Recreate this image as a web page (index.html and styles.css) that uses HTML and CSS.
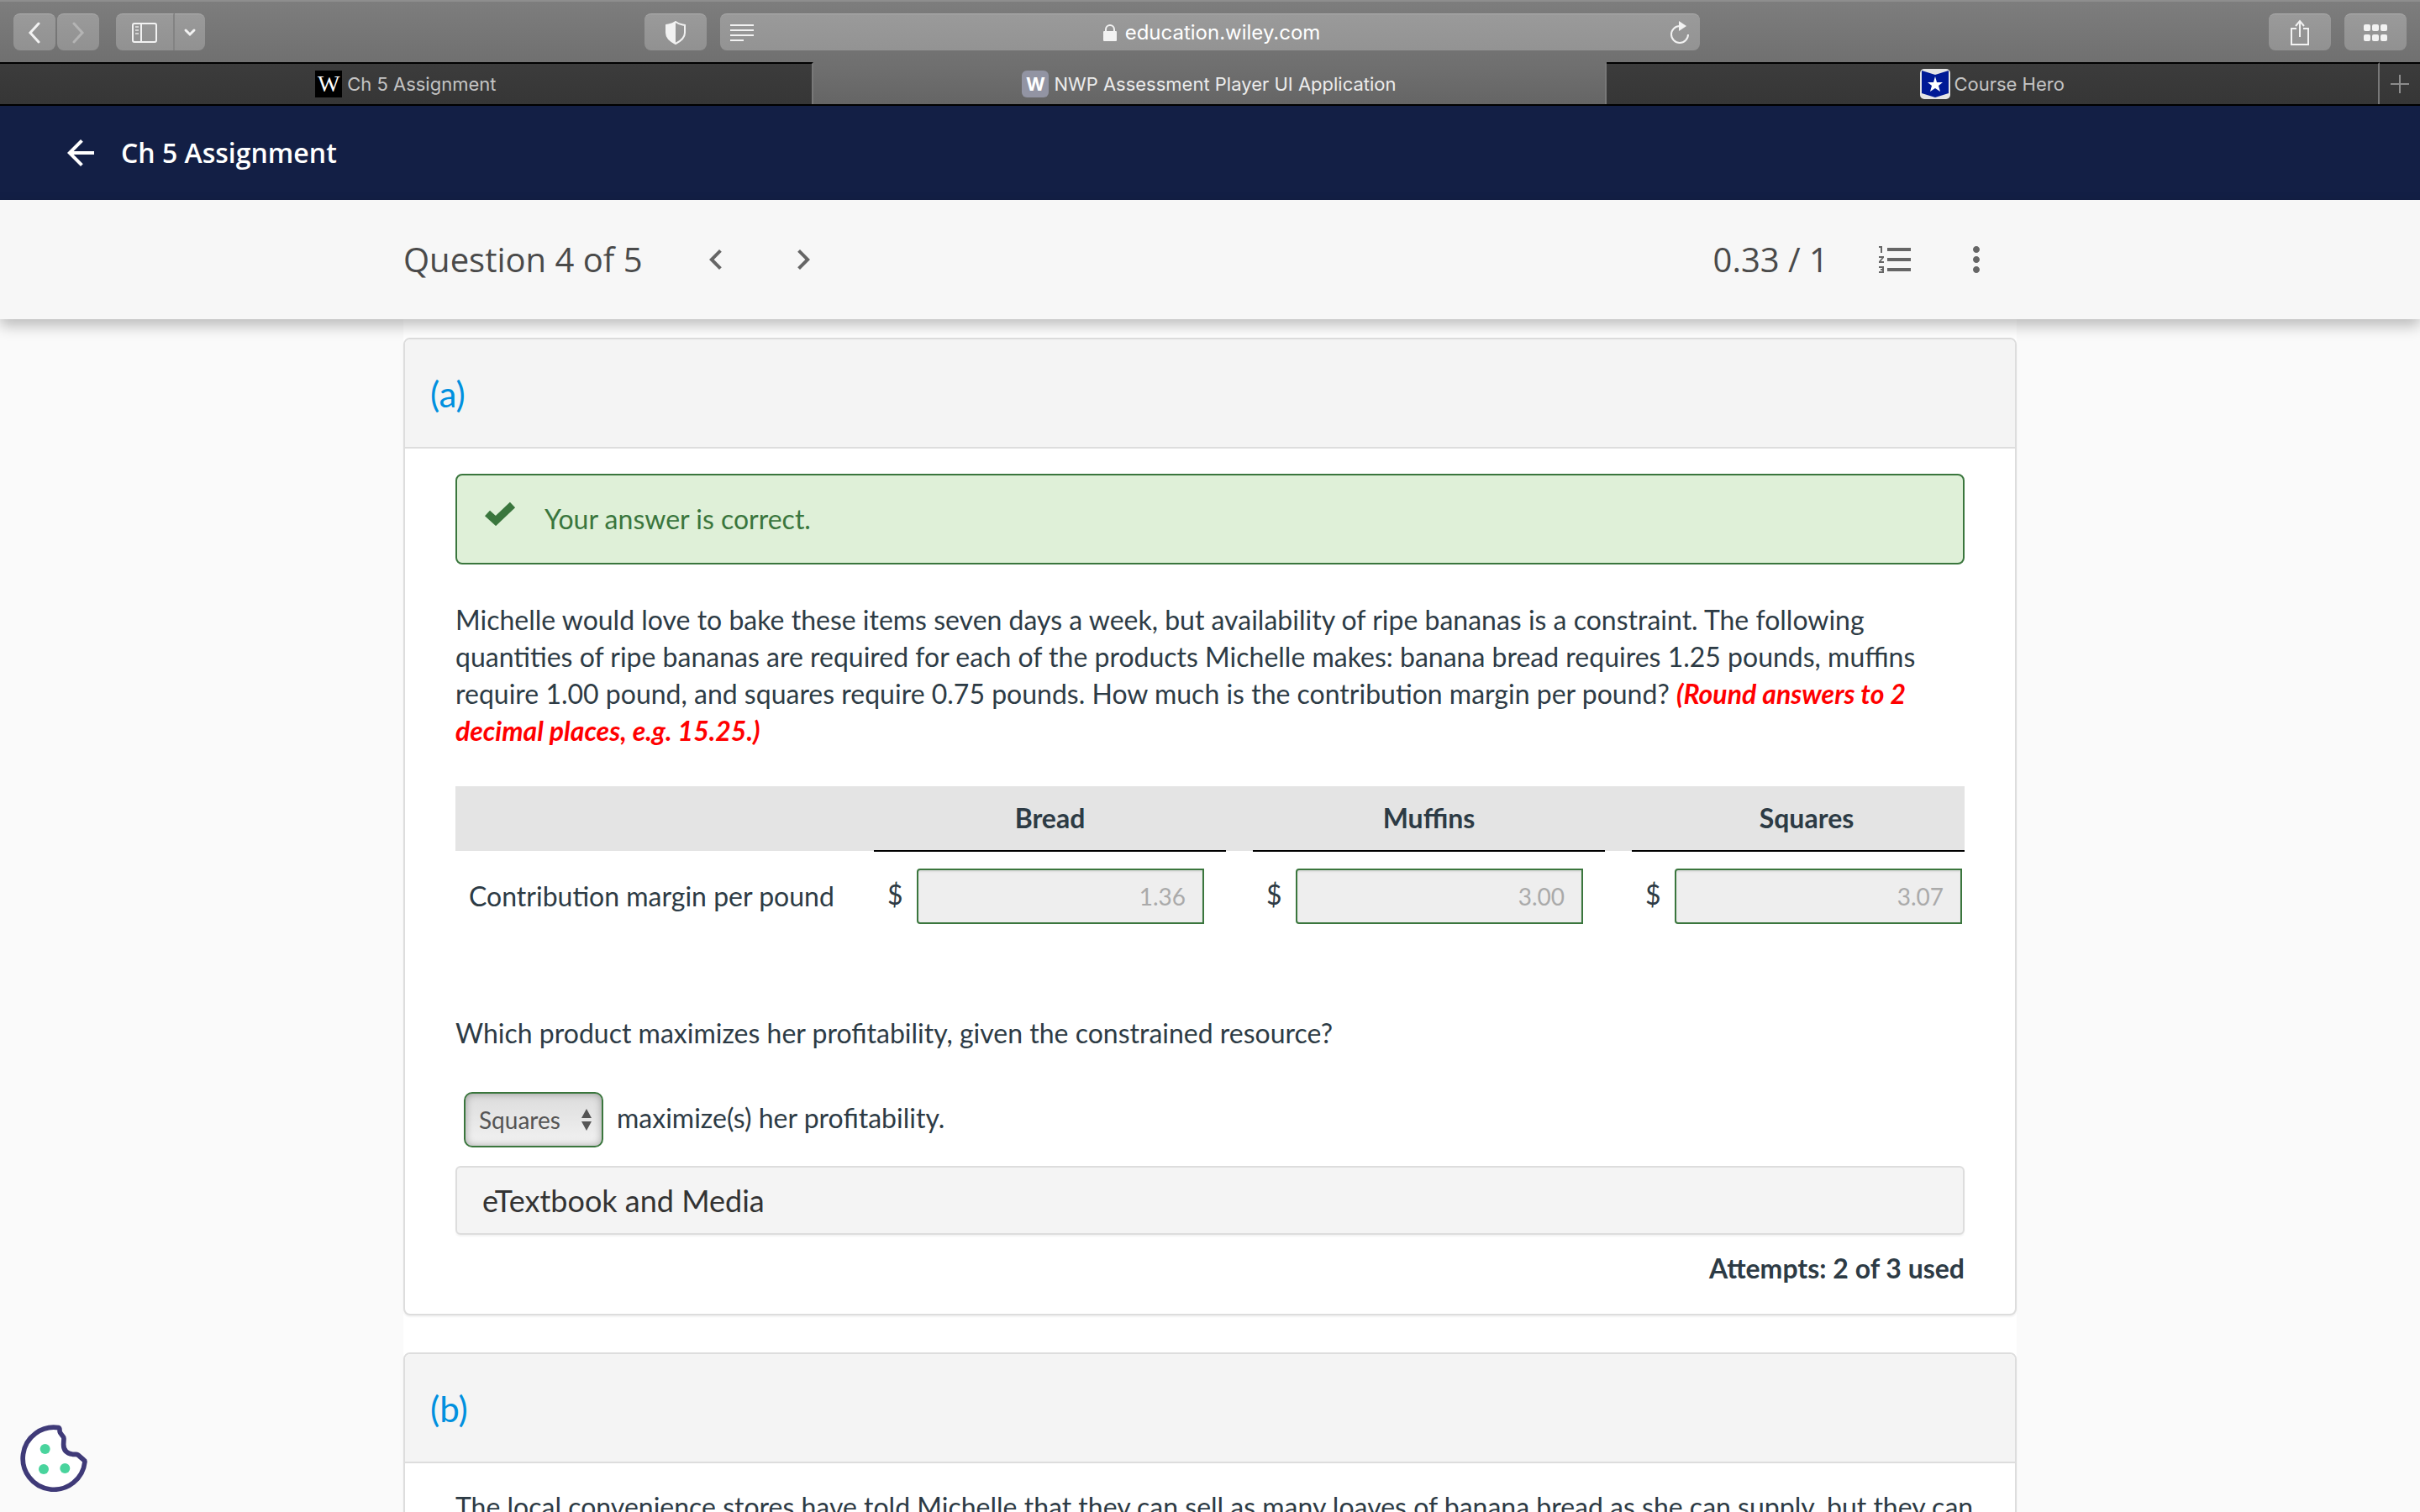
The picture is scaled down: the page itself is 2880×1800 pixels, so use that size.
FILE: index.html
```html
<!DOCTYPE html>
<html lang="en">
<head>
    <meta charset="UTF-8">
    <meta name="viewport" content="width=device-width, initial-scale=1.0">
    <title>NWP Assessment Player UI Application</title>
    <link rel="stylesheet" href="styles.css">
</head>
<body>
    <!-- browser toolbar -->
    <div class="toolbar">
        <div class="tool-left">
            <div class="nav-buttons">
                <button class="tool-btn small" aria-label="Back">
                    <svg width="16" height="26" viewBox="0 0 16 26"><path d="M13 2 3 13l10 11" fill="none" stroke="#f2f2f2" stroke-width="3" stroke-linecap="round"/></svg>
                </button>
                <button class="tool-btn small" aria-label="Forward">
                    <svg width="16" height="26" viewBox="0 0 16 26"><path d="m3 2 10 11L3 24" fill="none" stroke="#b4b4b4" stroke-width="3" stroke-linecap="round"/></svg>
                </button>
            </div>
            <div class="sidebar-buttons">
                <button class="tool-btn sidebar" aria-label="Show sidebar">
                    <svg width="30" height="24" viewBox="0 0 30 24"><rect x="1" y="1" width="28" height="22" rx="2" fill="none" stroke="#f2f2f2" stroke-width="2"/><path d="M11 1v22" stroke="#f2f2f2" stroke-width="2"/><path d="M4 5h4M4 9h4M4 13h4" stroke="#d2d2d2" stroke-width="2"/></svg>
                </button>
                <button class="tool-btn arrow" aria-label="Sidebar menu">
                    <svg width="16" height="12" viewBox="0 0 16 12"><path d="m3 3 5 5 5-5" fill="none" stroke="#f2f2f2" stroke-width="3" stroke-linecap="round"/></svg>
                </button>
            </div>
        </div>
        <div class="tool-center">
            <button class="tool-btn" aria-label="Privacy report">
                <svg width="24" height="28" viewBox="0 0 24 28"><path d="M12 1c4 3 7 3 11 4v9c0 6-5 10-11 13C6 24 1 20 1 14V5c4-1 7-1 11-4z" fill="none" stroke="#f2f2f2" stroke-width="2"/><path d="M12 1v26C6 24 1 20 1 14V5c4-1 7-1 11-4z" fill="#f2f2f2"/></svg>
            </button>
            <div class="address">
                <svg width="28" height="20" viewBox="0 0 28 20"><path d="M0 1h28M0 7h28M0 13h28M0 19h16" stroke="#f2f2f2" stroke-width="2"/></svg>
                <span class="url">
                    <svg width="16" height="20" viewBox="0 0 16 20"><rect y="8" width="16" height="12" rx="1" fill="#f2f2f2"/><path d="M3 9V6a5 5 0 0 1 10 0v3" fill="none" stroke="#f2f2f2" stroke-width="2"/></svg>
                    education.wiley.com
                </span>
                <svg width="24" height="28" viewBox="0 0 24 28"><path d="M12 6a10 10 0 1 0 10 10" fill="none" stroke="#f2f2f2" stroke-width="2"/><path d="m11 0 9 6-9 6z" fill="#f2f2f2"/></svg>
            </div>
        </div>
        <div class="tool-right">
            <button class="tool-btn" aria-label="Share">
                <svg width="24" height="32" viewBox="0 0 24 32"><path d="M8 11H2v19h20V11h-6" fill="none" stroke="#f2f2f2" stroke-width="2"/><path d="M12 21V2M7 8l5-6 5 6" fill="none" stroke="#f2f2f2" stroke-width="2"/></svg>
            </button>
            <button class="tool-btn" aria-label="Tab overview">
                <svg width="28" height="20" viewBox="0 0 28 20" fill="#f2f2f2"><rect width="8" height="8" rx="2"/><rect x="10" width="8" height="8" rx="2"/><rect x="20" width="8" height="8" rx="2"/><rect y="12" width="8" height="8" rx="2"/><rect x="10" y="12" width="8" height="8" rx="2"/><rect x="20" y="12" width="8" height="8" rx="2"/></svg>
            </button>
        </div>
    </div>

    <!-- browser tabs -->
    <div class="tabs">
        <div class="tab first"><span class="favicon wiley">W</span>Ch 5 Assignment</div>
        <div class="tab active"><span class="favicon nwp">W</span>NWP Assessment Player UI Application</div>
        <div class="tab last">
            <svg width="36" height="36" viewBox="0 0 36 36"><rect width="36" height="36" rx="5" fill="#e4e4e4"/><path d="M2 2l16 5 16-5v27l-16 5-16-5z" fill="#001a96"/><path d="m18 9 2 7h7l-5 4 2 7-6-4-6 4 2-7-5-4h7z" fill="#fff"/></svg>Course Hero
        </div>
        <button class="new-tab" aria-label="New tab">
            <svg width="22" height="22" viewBox="0 0 22 22"><path d="M11 0v22M0 11h22" stroke="#8c8c8c" stroke-width="2"/></svg>
        </button>
    </div>

    <header class="header">
        <a href="#" class="back" aria-label="Back to assignments">
            <svg width="48" height="48" viewBox="0 0 24 24" fill="#fff"><path d="M20 11H7.83l5.59-5.59L12 4l-8 8 8 8 1.41-1.41L7.83 13H20v-2z"/></svg>
        </a>
        <h1>Ch 5 Assignment</h1>
    </header>

    <div class="question-bar">
        <div class="question-inner">
            <h2>Question 4 of 5</h2>
            <button class="icon-btn" aria-label="Previous question">
                <svg width="48" height="48" viewBox="0 0 24 24"><path d="M15.41 7.41 14 6l-6 6 6 6 1.41-1.41L10.83 12z"/></svg>
            </button>
            <button class="icon-btn next" aria-label="Next question">
                <svg width="48" height="48" viewBox="0 0 24 24"><path d="M10 6 8.59 7.41 13.17 12l-4.58 4.59L10 18l6-6z"/></svg>
            </button>
            <span class="score">0.33 / 1</span>
            <button class="icon-btn list" aria-label="Question list">
                <svg width="48" height="48" viewBox="0 0 24 24"><path d="M2 17h2v.5H3v1h1v.5H2v1h3v-4H2v1zm1-9h1V4H2v1h1v3zm-1 3h1.8L2 13.1v.9h3v-1H3.2L5 10.9V10H2v1zm5-6v2h14V5H7zm0 14h14v-2H7v2zm0-6h14v-2H7v2z"/></svg>
            </button>
            <button class="icon-btn more" aria-label="More options">
                <svg width="48" height="48" viewBox="0 0 24 24"><path d="M12 8c1.1 0 2-.9 2-2s-.9-2-2-2-2 .9-2 2 .9 2 2 2zm0 2c-1.1 0-2 .9-2 2s.9 2 2 2 2-.9 2-2-.9-2-2-2zm0 6c-1.1 0-2 .9-2 2s.9 2 2 2 2-.9 2-2-.9-2-2-2z"/></svg>
            </button>
        </div>
    </div>

    <main class="content">
        <div class="container">
            <section class="panel">
                <h3>(a)</h3>
                <div class="panel-body">
                    <div class="alert">
                        <svg width="38" height="30" viewBox="0 0 38 30"><path d="m4 15 10 9L34 5" fill="none" stroke="#3a763d" stroke-width="9"/></svg>
                        Your answer is correct.
                    </div>
                    <p>Michelle would love to bake these items seven days a week, but availability of ripe bananas is a constraint. The following quantities of ripe bananas are required for each of the products Michelle makes: banana bread requires 1.25 pounds, muffins require 1.00 pound, and squares require 0.75 pounds. How much is the contribution margin per pound? <em>(Round answers to 2<br>decimal places, e.g. 15.25.)</em></p>

                    <table>
                        <colgroup>
                            <col>
                            <col class="col-answer">
                            <col class="col-gap">
                            <col class="col-answer">
                            <col class="col-gap">
                            <col class="col-last">
                        </colgroup>
                        <thead>
                            <tr>
                                <td></td>
                                <th id="bread">Bread</th>
                                <td></td>
                                <th id="muffins">Muffins</th>
                                <td></td>
                                <th id="squares" class="last">Squares</th>
                            </tr>
                        </thead>
                        <tbody>
                            <tr>
                                <th id="margin" class="row-name">Contribution margin per pound</th>
                                <td><div class="answer"><span>$</span><input type="text" value="1.36" aria-labelledby="margin bread" disabled></div></td>
                                <td></td>
                                <td><div class="answer"><span>$</span><input type="text" value="3.00" aria-labelledby="margin muffins" disabled></div></td>
                                <td></td>
                                <td><div class="answer"><span>$</span><input type="text" value="3.07" aria-labelledby="margin squares" disabled></div></td>
                            </tr>
                        </tbody>
                    </table>

                    <p class="question">Which product maximizes her profitability, given the constrained resource?</p>

                    <div class="choice">
                        <div class="select">
                            <select id="id_product" disabled>
                                <option>Bread</option>
                                <option>Muffins</option>
                                <option selected>Squares</option>
                            </select>
                            <svg width="14" height="26" viewBox="0 0 14 26" fill="#555"><path d="m7 0 6 11H1zM7 26l6-11H1z"/></svg>
                        </div>
                        <label for="id_product">maximize(s) her profitability.</label>
                    </div>

                    <button class="media">eTextbook and Media</button>
                    <div class="attempts">Attempts: 2 of 3 used</div>
                </div>
            </section>

            <section class="panel">
                <h3>(b)</h3>
                <div class="panel-body">
                    <p class="stores">The local convenience stores have told Michelle that they can sell as many loaves of banana bread as she can supply, but they can</p>
                </div>
            </section>
        </div>
    </main>

    <button class="cookie" aria-label="Cookie settings">
        <svg width="80" height="80" viewBox="0 0 240 240"><path d="M138 11A111 111 0 1 0 231 132q0-4-4-6l-14-12q-6-8-14-8l-12 0q-34-6-32-38l1-18q0-5-5-10l-8-11q-2-4-2-9 0-8-3-9z" fill="#fff" stroke="#3f3a78" stroke-width="17" stroke-linejoin="round"/><g fill="#49d49d"><circle cx="89" cy="87" r="18"/><circle cx="84" cy="159" r="18"/><circle cx="160" cy="156" r="18"/></g></svg>
    </button>
</body>
</html>
```
FILE: styles.css
```css
* {
    box-sizing: border-box;
}

body {
    margin: 0;
    height: 100vh;
    display: flex;
    flex-direction: column;
    overflow: hidden;
    background-color: #fafafa;
    font-family: Lato, sans-serif;
    font-size: 32px;
    line-height: 44px;
    color: #2d3b45;
}

button {
    border: none;
    padding: 0;
    background: none;
    cursor: pointer;
    display: flex;
    align-items: center;
    justify-content: center;
}

svg {
    display: block;
    flex-shrink: 0;
}

/* browser */
.toolbar {
    flex-shrink: 0;
    height: 74px;
    padding: 0 16px;
    display: flex;
    align-items: center;
    background: linear-gradient(#7d7d7d, #707070);
    border-top: 2px solid #8e8e8e;
    font-family: Inter, sans-serif;
}

.tool-left,
.tool-center,
.tool-right {
    display: flex;
    gap: 16px;
}

.tool-left {
    flex: 751;
    gap: 20px;
}

.tool-center {
    flex: 1256;
}

.tool-right {
    flex: 841;
    justify-content: flex-end;
}

.nav-buttons {
    display: flex;
    gap: 2px;
}

.sidebar-buttons {
    display: flex;
}

.tool-btn {
    width: 74px;
    height: 44px;
    border-radius: 8px;
    background: linear-gradient(#9a9a9a, #919191);
    border-top: 1px solid #adadad;
}

.tool-btn.small {
    width: 50px;
}

.tool-btn.sidebar {
    width: 70px;
    border-radius: 8px 0 0 8px;
    border-right: 2px solid #838383;
}

.tool-btn.arrow {
    width: 36px;
    border-radius: 0 8px 8px 0;
}

.address {
    flex: 1;
    height: 44px;
    padding: 0 12px;
    display: flex;
    align-items: center;
    justify-content: space-between;
    border-radius: 8px;
    background: linear-gradient(#9a9a9a, #939393);
    border-top: 1px solid #adadad;
}

.url {
    display: flex;
    align-items: center;
    gap: 10px;
    font-size: 24px;
    color: #fff;
}

.tabs {
    flex-shrink: 0;
    height: 52px;
    display: flex;
    background: linear-gradient(#3c3c3c, #363636);
    border-bottom: 2px solid #000;
    font-family: Inter, sans-serif;
    font-size: 22px;
    color: #c4c4c4;
}

.tab {
    display: flex;
    align-items: center;
    justify-content: center;
    gap: 6px;
    border-top: 2px solid #000;
    border-right: 2px solid #787878;
}

.tab.first {
    flex: 967;
}

.tab.last {
    flex: 919;
    gap: 4px;
}

.tab.active {
    flex: 944;
    background: linear-gradient(#707070, #656565);
    border-top-color: #707070;
    color: #ececec;
}

.favicon {
    width: 32px;
    height: 32px;
    line-height: 32px;
    text-align: center;
    color: #fff;
}

.wiley {
    background-color: #000;
    font-family: "Liberation Serif", serif;
    font-size: 28px;
}

.nwp {
    background-color: #9294a3;
    border-radius: 6px;
    font-weight: 700;
}

.new-tab {
    width: 48px;
    border-top: 2px solid #000;
}

/* assignment header */
.header {
    flex-shrink: 0;
    height: 112px;
    padding: 0 72px;
    display: flex;
    align-items: center;
    gap: 24px;
    background-color: #131f45;
    color: #fff;
}

.header h1 {
    margin: 0;
    font-family: "Open Sans", sans-serif;
    font-size: 32px;
    font-weight: 600;
}

.question-bar {
    flex-shrink: 0;
    position: relative;
    background-color: #f7f7f7;
    box-shadow: 0 8px 16px rgba(0, 0, 0, 0.25);
    font-family: "Open Sans", sans-serif;
    color: #4a4a4a;
}

.question-inner {
    max-width: 1920px;
    height: 142px;
    margin: 0 auto;
    padding-right: 24px;
    display: flex;
    align-items: center;
}

.question-inner h2 {
    margin: 0 63px 0 0;
    font-size: 40px;
    font-weight: 400;
}

.icon-btn svg {
    fill: #666;
}

.icon-btn.next {
    margin-left: 56px;
}

.score {
    margin-left: auto;
    font-size: 40px;
}

.icon-btn.list {
    margin-left: 56px;
}

.icon-btn.more {
    margin-left: 48px;
}

/* question parts */
.content {
    flex: 1;
    min-height: 0;
    overflow: hidden;
}

.container {
    max-width: 1920px;
    margin: 0 auto;
    padding-top: 22px;
    background-color: #fff;
}

.panel {
    margin-bottom: 44px;
    background-color: #fff;
    border: 2px solid #ddd;
    border-radius: 8px;
    box-shadow: 0 2px 2px rgba(0, 0, 0, 0.05);
}

.panel h3 {
    margin: 0;
    padding: 43px 30px 41px;
    background-color: #f4f4f4;
    border-bottom: 2px solid #ddd;
    border-radius: 6px 6px 0 0;
    font-size: 42px;
    font-weight: 400;
    color: #0090df;
}

.panel-body {
    padding: 30px 60px 32px;
}

.alert {
    height: 108px;
    margin-bottom: 44px;
    padding: 0 32px;
    display: flex;
    align-items: center;
    gap: 34px;
    background-color: #dff0d8;
    border: 2px solid #3a763d;
    border-radius: 8px;
    color: #3a763d;
}

.alert svg {
    margin-bottom: 14px;
}

.panel p {
    margin: 0;
}

.panel em {
    font-weight: 700;
    color: #f00;
    white-space: nowrap;
}

.panel .stores {
    white-space: nowrap;
}

table {
    width: 100%;
    margin-top: 44px;
    table-layout: fixed;
    border-collapse: collapse;
}

.col-answer {
    width: 419px;
}

.col-gap {
    width: 32px;
}

.col-last {
    width: 396px;
}

th,
td {
    padding: 0;
}

thead tr {
    background-color: #e4e4e4;
}

thead th {
    height: 77px;
    border-bottom: 2px solid #000;
}

thead th.last {
    padding-left: 20px;
}

.row-name {
    padding: 20px 0 0 16px;
    font-weight: 400;
    text-align: left;
}

.answer {
    display: flex;
    align-items: center;
    padding: 20px 0 0 16px;
}

.answer span {
    width: 35px;
    padding-bottom: 4px;
}

.answer input {
    width: 342px;
    height: 66px;
    padding: 0 20px;
    background-color: #eee;
    border: 2px solid #3a763d;
    border-radius: 4px 0 0 4px;
    box-shadow: inset 0 2px 2px rgba(0, 0, 0, 0.08);
    font-family: Lato, sans-serif;
    font-size: 28px;
    text-align: right;
    color: #aaa;
}

.panel .question {
    margin: 108px 0 48px;
}

.choice {
    display: flex;
    align-items: center;
    gap: 16px;
    padding-left: 10px;
}

.choice label {
    padding-bottom: 4px;
}

.select {
    position: relative;
}

.select select {
    appearance: none;
    width: 166px;
    height: 66px;
    padding: 0 16px;
    background: linear-gradient(#dcdcdc, #f2f2f2);
    border: 2px solid #3a763d;
    border-radius: 10px;
    box-shadow: inset 0 0 10px rgba(0, 0, 0, 0.3);
    font-family: Lato, sans-serif;
    font-size: 28px;
    color: #555;
    opacity: 1;
}

.select svg {
    position: absolute;
    top: 20px;
    right: 13px;
}

.media {
    width: 100%;
    height: 82px;
    margin: 22px 0 18px;
    padding: 0 30px;
    justify-content: flex-start;
    background-color: #f4f4f4;
    border: 2px solid #ddd;
    border-radius: 6px;
    box-shadow: 0 2px 2px rgba(0, 0, 0, 0.05);
    font-family: Lato, sans-serif;
    font-size: 36px;
    color: #333;
}

.attempts {
    font-weight: 700;
    text-align: right;
}

.cookie {
    position: fixed;
    left: 24px;
    bottom: 24px;
}
```
